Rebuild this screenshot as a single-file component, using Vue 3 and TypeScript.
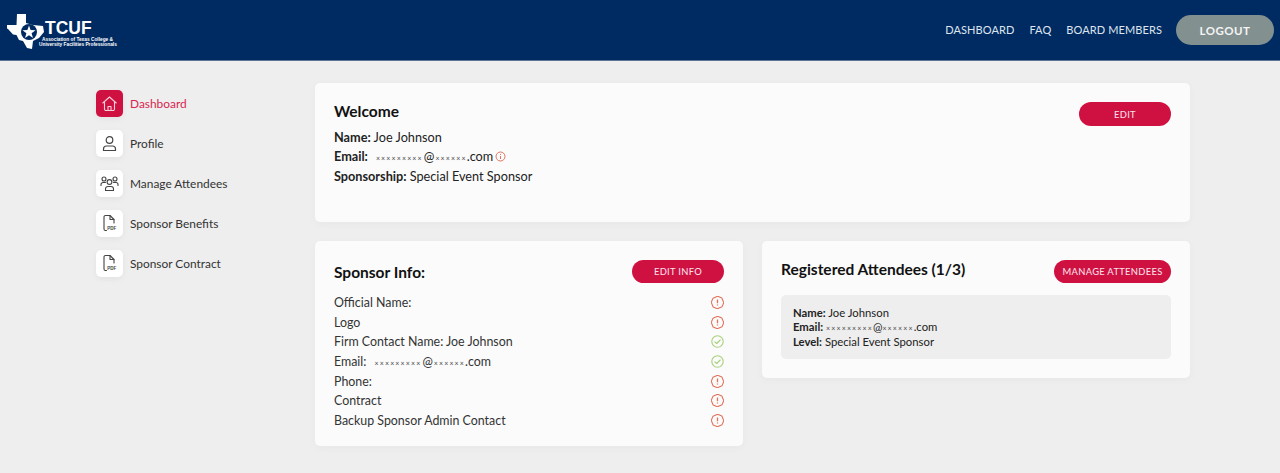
<script setup lang="ts">
const nav = ['DASHBOARD', 'FAQ', 'BOARD MEMBERS']
const side = [
  { label: 'Dashboard', icon: 'home', active: true },
  { label: 'Profile', icon: 'user', active: false },
  { label: 'Manage Attendees', icon: 'users', active: false },
  { label: 'Sponsor Benefits', icon: 'pdf', active: false },
  { label: 'Sponsor Contract', icon: 'pdf', active: false },
]
const rows = [
  { label: 'Official Name:', ok: false, masked: false },
  { label: 'Logo', ok: false, masked: false },
  { label: 'Firm Contact Name: Joe Johnson', ok: true, masked: false },
  { label: 'Email:', ok: true, masked: true },
  { label: 'Phone:', ok: false, masked: false },
  { label: 'Contract', ok: false, masked: false },
  { label: 'Backup Sponsor Admin Contact', ok: false, masked: false },
]
</script>

<template>
  <div class="page">
    <header class="top">
      <div class="logo">
        <svg class="tx" width="38" height="35" viewBox="0 0 38 35">
          <path fill="#fff" d="M10 0h9v9l7 2 10 1 1 6-5 6-6 3-1 8-5-1-4-7-4-1-2.500-5-3.500-.5-5-5.500-1-.5v-3.500h9.500z" />
          <circle cx="22" cy="18" r="8" fill="#002b62" />
          <path fill="#fff" d="M22 11.500l1.600 4.600 4.900.2-3.900 3 1.400 4.700-4-2.800-4 2.800 1.400-4.700-3.900-3 4.900-.2z" />
        </svg>
        <div class="logo-text">
          <div class="tcuf">TCUF</div>
          <div class="assoc a1">Association of Texas College &amp;</div>
          <div class="assoc a2">University Facilities Professionals</div>
        </div>
      </div>
      <nav class="nav">
        <a v-for="n in nav" :key="n">{{ n }}</a>
        <button class="logout">LOGOUT</button>
      </nav>
    </header>

    <main class="main">
      <aside class="side">
        <div v-for="s in side" :key="s.label" class="side-item" :class="{ active: s.active }">
          <span class="side-icon">
            <svg v-if="s.icon === 'home'" width="17" height="17" viewBox="0 0 17 17" fill="none" stroke="currentColor" stroke-width="1.100" stroke-linejoin="round" stroke-linecap="round">
              <path d="M1.800 8L8.500 2l6.700 6" />
              <path d="M3.500 7v7a1.500 1.500 0 0 0 1.500 1.500h7a1.500 1.500 0 0 0 1.500-1.500V7" />
              <path d="M7 15.500v-4h3v4" />
            </svg>
            <svg v-else-if="s.icon === 'user'" width="17" height="17" viewBox="0 0 17 17" fill="none" stroke="currentColor" stroke-width="1.200">
              <circle cx="8.500" cy="5" r="3.300" />
              <path d="M2.500 15.500v-1.500a3 3 0 0 1 3-3h6a3 3 0 0 1 3 3v1.500z" stroke-linejoin="round" />
            </svg>
            <svg v-else-if="s.icon === 'users'" width="19" height="17" viewBox="0 0 19 17" fill="none" stroke="currentColor" stroke-width="1.100">
              <circle cx="4" cy="4" r="2" />
              <circle cx="15" cy="4" r="2" />
              <circle cx="9.500" cy="7" r="2.400" />
              <path d="M1 10.500V9.500a2 2 0 0 1 2-2h2.500M18 10.500V9.500a2 2 0 0 0-2-2h-2.500" stroke-linecap="round" />
              <path d="M5.500 15.500v-1.500a2.500 2.500 0 0 1 2.500-2.500h3a2.500 2.500 0 0 1 2.500 2.500v1.500z" stroke-linejoin="round" />
            </svg>
            <svg v-else width="17" height="19" viewBox="0 0 17 19" fill="none" stroke="currentColor" stroke-width="1.100" stroke-linejoin="round" stroke-linecap="round">
              <path d="M5.500 16.500H4.500A1.500 1.500 0 0 1 3 15V3a1.500 1.500 0 0 1 1.500-1.500H9l4 4V9" />
              <path d="M9 1.500v4h4" />
              <text x="6.200" y="16" class="pdf">PDF</text>
            </svg>
          </span>
          <span class="side-label">{{ s.label }}</span>
        </div>
      </aside>

      <div class="content">
        <section class="card welcome">
          <div class="welcome-text">
            <h2>Welcome</h2>
            <p><b>Name:</b> Joe Johnson</p>
            <p class="email-line">
              <b>Email:</b>
              <span class="mail"><span class="mask">×××××××××</span><span class="at">@</span><span class="mask">××××××</span>.com</span>
              <svg class="info" width="11" height="11" viewBox="0 0 11 11" fill="none" stroke="#e2725b" stroke-width="1">
                <circle cx="5.500" cy="5.500" r="4.500" />
                <path d="M5.500 5v3M5.500 3v1" />
              </svg>
            </p>
            <p><b>Sponsorship:</b> Special Event Sponsor</p>
          </div>
          <button class="btn edit">EDIT</button>
        </section>

        <div class="lower">
          <section class="card sponsor">
            <div class="card-head">
              <h2>Sponsor Info:</h2>
              <button class="btn info-btn">EDIT INFO</button>
            </div>
            <ul class="rows">
              <li v-for="r in rows" :key="r.label">
                <span class="row-label">
                  {{ r.label }}
                  <span v-if="r.masked" class="mail row-mail"><span class="mask">×××××××××</span><span class="at">@</span><span class="mask">××××××</span>.com</span>
                </span>
                <svg v-if="r.ok" width="13" height="13" viewBox="0 0 13 13" fill="none" stroke="#a9d17c" stroke-width="1.100">
                  <circle cx="6.500" cy="6.500" r="5.700" />
                  <path d="M3.800 6.800l1.900 1.700 3.500-3.500" stroke-linecap="round" stroke-linejoin="round" />
                </svg>
                <svg v-else width="13" height="13" viewBox="0 0 13 13" fill="none" stroke="#e2725b" stroke-width="1.100">
                  <path d="M4.200.7h4.600l3.500 3.500v4.600l-3.500 3.500H4.200L.7 8.800V4.200z" stroke-linejoin="round" transform="rotate(22.500 6.500 6.500)" />
                  <path d="M6.500 3.400v3.800M6.500 8.500v1.100" stroke-width="1.300" />
                </svg>
              </li>
            </ul>
          </section>

          <section class="card attendees">
            <div class="card-head">
              <h2 class="att-title">Registered Attendees (1/3)</h2>
              <button class="btn manage">MANAGE ATTENDEES</button>
            </div>
            <div class="attendee">
              <div><b>Name:</b> Joe Johnson</div>
              <div><b>Email:</b> <span class="mask">×××××××××</span>@<span class="mask">××××××</span>.com</div>
              <div><b>Level:</b> Special Event Sponsor</div>
            </div>
          </section>
        </div>
      </div>
    </main>
  </div>
</template>

<style>
html, body { margin: 0; background: #eeeeee; }
</style>

<style scoped>
.page {
  min-height: 473px;
  background: #eeeeee;
  color: #222;
  font-family: Lato, "Noto Sans", sans-serif;
  font-size: 12.700px;
}
.top {
  height: 61px;
  box-sizing: border-box;
  background: #002b62;
  border-bottom: 1px solid #5f7696;
  display: flex;
  align-items: center;
  justify-content: space-between;
  padding: 0 6px 0 7px;
}
.logo { display: flex; align-items: flex-start; margin-top: 2px; }
.logo-text { color: #fff; margin-left: -6px; width: 90px; padding-top: 7px; }
.tcuf {
  font: 700 17.500px/15px "Liberation Sans", sans-serif;
  margin-left: 6px;
}
.assoc {
  font: 700 4.800px/5.500px "Liberation Sans", sans-serif;
  white-space: nowrap;
}
.a1 { margin-left: 3px; margin-top: 1px; }
.nav { display: flex; align-items: center; font-size: 11px; color: #dfe5ee; letter-spacing: 0.1px; }
.nav a { margin-right: 15px; padding-bottom: 2px; }
.nav a:nth-child(3) { margin-right: 14px; }
.logout {
  width: 98px;
  height: 30px;
  border: 0;
  border-radius: 15px;
  background: #82908f;
  color: #f4f4f4;
  font: 700 11.500px Lato, sans-serif;
  letter-spacing: 0.5px;
}
.main {
  display: grid;
  grid-template-columns: 219px 875px;
  padding: 22px 0 0 96px;
}
.side { display: flex; flex-direction: column; gap: 13px; padding-top: 7px; }
.side-item { display: flex; align-items: center; gap: 7px; height: 27px; color: #333; font-size: 11.900px; }
.side-icon {
  width: 27px;
  height: 27px;
  border-radius: 5px;
  background: #fff;
  display: flex;
  align-items: center;
  justify-content: center;
  color: #444;
  box-shadow: 0 2px 6px rgba(0, 0, 0, 0.05);
}
.active { color: #d8254f; }
.active .side-icon { background: #cf1141; color: #f7cfd9; }
.pdf { font: 700 4.500px "Liberation Sans", sans-serif; fill: #444; stroke: none; }
.content { display: flex; flex-direction: column; gap: 19px; }
.card {
  background: #fbfbfb;
  border-radius: 5px;
  box-sizing: border-box;
  padding: 19px;
  box-shadow: 0 2px 8px rgba(0, 0, 0, 0.03);
}
.welcome { height: 139px; display: flex; justify-content: space-between; align-items: flex-start; }
.welcome-text { margin-top: -1px; }
h2 { margin: 0; font-size: 15.500px; font-weight: 700; color: #111; line-height: 20px; }
.welcome h2 { margin-bottom: 7px; }
p { margin: 0; line-height: 19.500px; height: 19.500px; }
.email-line { margin-top: -1px; margin-bottom: 1px; }
b { font-weight: 700; color: #222; }
.mail { margin-left: 8px; }
.row-mail { margin-left: 5px; }
.at { margin: 0 1px; }
.mask { font-size: 7px; letter-spacing: 1.150px; color: #444; }
.info { margin-left: 2px; vertical-align: -1px; }
.btn {
  border: 0;
  height: 23px;
  border-radius: 12px;
  background: #cf1141;
  color: #f9dfe5;
  font: 500 9.400px Lato, sans-serif;
  letter-spacing: 0.3px;
  padding: 0;
}
.edit { width: 92px; height: 24px; }
.info-btn { width: 92px; }
.manage { width: 117px; }
.lower { display: grid; grid-template-columns: 428px 428px; gap: 19px; align-items: start; }
.sponsor { height: 205px; }
.attendees { height: 137px; }
.card-head { display: flex; justify-content: space-between; align-items: center; height: 23px; margin-bottom: 10px; }
.attendees .card-head { margin-bottom: 12px; }
.att-title { position: relative; top: -3px; }
.rows { list-style: none; margin: 0; padding: 0; }
.rows li { display: flex; justify-content: space-between; align-items: center; height: 19.600px; color: #333; font-size: 12.400px; }
.attendee {
  background: #eeeeee;
  border-radius: 5px;
  padding: 11px 12px;
  font-size: 11.300px;
  line-height: 14px;
  height: 42px;
}
</style>
